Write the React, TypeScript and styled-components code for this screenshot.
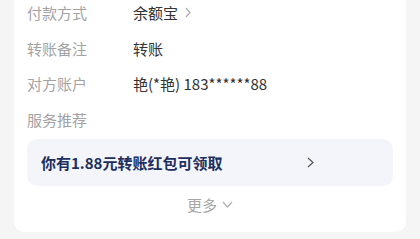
import React from "react";
import styled, { createGlobalStyle } from "styled-components";

const Global = createGlobalStyle`
  html, body { margin: 0; padding: 0; background: #f5f5f5; }
  body { font-family: "Noto Sans CJK SC", "Noto Sans", sans-serif; overflow: hidden; }
`;

const Page = styled.div`
  width: 420px;
  height: 239px;
  padding: 0 14px;
  box-sizing: border-box;
  overflow: hidden;
`;

const Card = styled.div`
  margin-top: -5px;
  background: #fff;
  border-radius: 0 0 10px 10px;
  padding: 0 13px;
  height: 237px;
  box-sizing: border-box;
  display: flex;
  flex-direction: column;
`;

const Row = styled.div`
  height: 35.5px;
  display: flex;
  align-items: center;
  font-size: 15px;
  flex-shrink: 0;
`;

const Label = styled.span`
  width: 106px;
  color: #a3a3a3;
`;

const Value = styled.span`
  color: #333;
  display: flex;
  align-items: center;
  gap: 7px;
`;

const Promo = styled.div`
  margin-top: 2px;
  height: 47px;
  background: #f3f5fa;
  border-radius: 10px;
  display: flex;
  align-items: center;
  padding-left: 14px;
  flex-shrink: 0;
`;

const PromoText = styled.span`
  font-size: 15px;
  font-weight: 600;
  color: #1d2f5e;
  width: 266px;
`;

const More = styled.div`
  flex: 1;
  display: flex;
  align-items: center;
  justify-content: center;
  gap: 5px;
  font-size: 15px;
  color: #a6a6a6;
  padding-bottom: 10px;
`;

const Chevron = ({ dir, color, w, h }: { dir: "right" | "down"; color: string; w: number; h: number }) =>
  dir === "right" ? (
    <svg width={w} height={h} viewBox={`0 0 ${w} ${h}`} fill="none">
      <path d={`M1 1 L${w - 1} ${h / 2} L1 ${h - 1}`} stroke={color} strokeWidth="1.2" />
    </svg>
  ) : (
    <svg width={w} height={h} viewBox={`0 0 ${w} ${h}`} fill="none">
      <path d={`M1 1 L${w / 2} ${h - 1} L${w - 1} 1`} stroke={color} strokeWidth="1.2" />
    </svg>
  );

export default function App() {
  return (
    <>
      <Global />
      <Page>
        <Card>
          <Row>
            <Label>付款方式</Label>
            <Value>
              余额宝
              <Chevron dir="right" color="#aaa" w={6} h={11} />
            </Value>
          </Row>
          <Row>
            <Label>转账备注</Label>
            <Value>转账</Value>
          </Row>
          <Row>
            <Label>对方账户</Label>
            <Value>艳(*艳) 183******88</Value>
          </Row>
          <Row>
            <Label>服务推荐</Label>
          </Row>
          <Promo>
            <PromoText>你有1.88元转账红包可领取</PromoText>
            <Chevron dir="right" color="#555" w={7} h={11} />
          </Promo>
          <More>
            更多
            <Chevron dir="down" color="#b0b0b0" w={11} h={7} />
          </More>
        </Card>
      </Page>
    </>
  );
}
